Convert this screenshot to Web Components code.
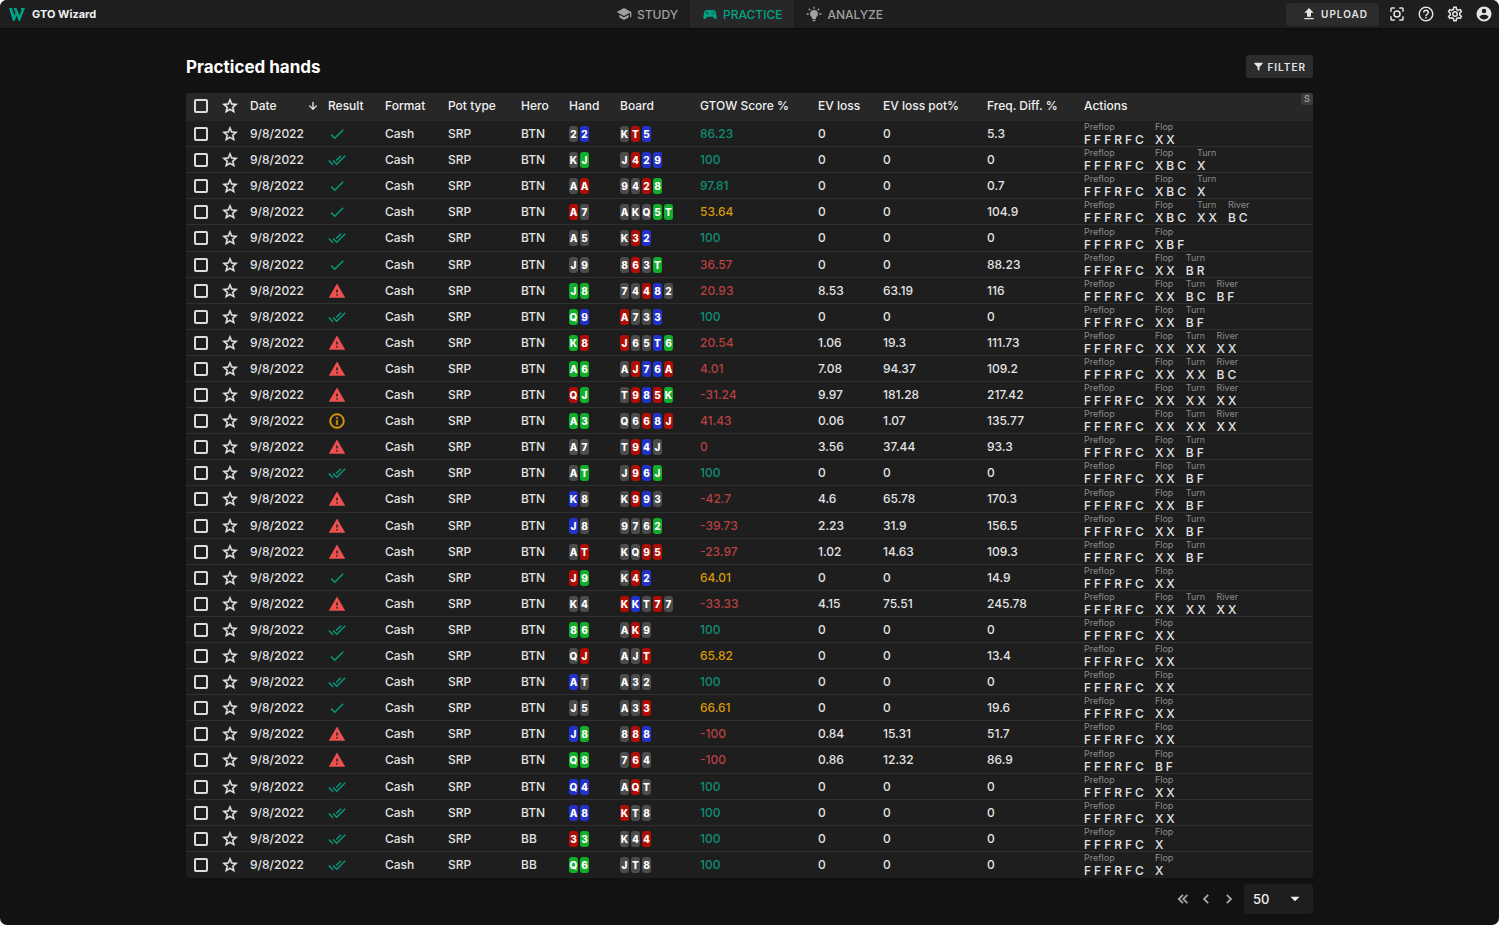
<!DOCTYPE html>
<html lang="en">
<head>
<meta charset="utf-8">
<meta name="viewport" content="width=device-width, initial-scale=1">
<title>GTO Wizard - Practiced hands</title>
<style>
  body { margin: 0; background: #fff; font-family: Inter, "Liberation Sans", sans-serif; font-size: 12px; color: #e4e4e4; }
</style>
</head>
<body>
<gto-app></gto-app>
<script>
const ICONS = {
  study: 'M12,3L1,9L12,15L21,10.09V17H23V9M5,13.18V17.18L12,21L19,17.18V13.18L12,17L5,13.18Z',
  practice: 'M7.97,16L5,19C4.67,19.3 4.23,19.5 3.75,19.5A1.75,1.75 0 0,1 2,17.75V17.5L3,10.12C3.21,7.81 5.14,6 7.5,6H16.5C18.86,6 20.79,7.81 21,10.12L22,17.5V17.75A1.75,1.75 0 0,1 20.25,19.5C19.77,19.5 19.33,19.3 19,19L16.03,16H7.97M7,8V10H5V11H7V13H8V11H10V10H8V8H7M16.5,8A0.75,0.75 0 0,0 15.75,8.75A0.75,0.75 0 0,0 16.5,9.5A0.75,0.75 0 0,0 17.25,8.75A0.75,0.75 0 0,0 16.5,8M14.75,9.75A0.75,0.75 0 0,0 14,10.5A0.75,0.75 0 0,0 14.75,11.25A0.75,0.75 0 0,0 15.5,10.5A0.75,0.75 0 0,0 14.75,9.75M18.25,9.75A0.75,0.75 0 0,0 17.5,10.5A0.75,0.75 0 0,0 18.25,11.25A0.75,0.75 0 0,0 19,10.5A0.75,0.75 0 0,0 18.25,9.75M16.5,11.5A0.75,0.75 0 0,0 15.75,12.25A0.75,0.75 0 0,0 16.5,13A0.75,0.75 0 0,0 17.25,12.25A0.75,0.75 0 0,0 16.5,11.5Z',
  analyze: 'M12,6A6,6 0 0,1 18,12C18,14.22 16.79,16.16 15,17.2V19A1,1 0 0,1 14,20H10A1,1 0 0,1 9,19V17.2C7.21,16.16 6,14.22 6,12A6,6 0 0,1 12,6M14,21V22A1,1 0 0,1 13,23H11A1,1 0 0,1 10,22V21H14M20,11H23V13H20V11M1,11H4V13H1V11M13,1V4H11V1H13M4.92,3.5L7.05,5.64L5.63,7.05L3.5,4.93L4.92,3.5M16.95,5.63L19.07,3.5L20.5,4.93L18.37,7.05L16.95,5.63Z',
  upload: 'M9,16V10H5L12,3L19,10H15V16H9M5,20V18H19V20H5Z',
  focus: 'M5,15H3V19A2,2 0 0,0 5,21H9V19H5M5,5H9V3H5A2,2 0 0,0 3,5V9H5M19,3H15V5H19V9H21V5A2,2 0 0,0 19,3M19,19H15V21H19A2,2 0 0,0 21,19V15H19M12,7A5,5 0 0,0 7,12A5,5 0 0,0 12,17A5,5 0 0,0 17,12A5,5 0 0,0 12,7M12,15A3,3 0 0,1 9,12A3,3 0 0,1 12,9A3,3 0 0,1 15,12A3,3 0 0,1 12,15Z',
  help: 'M11,18H13V16H11V18M12,2A10,10 0 0,0 2,12A10,10 0 0,0 12,22A10,10 0 0,0 22,12A10,10 0 0,0 12,2M12,20C7.59,20 4,16.41 4,12C4,7.59 7.59,4 12,4C16.41,4 20,7.59 20,12C20,16.41 16.41,20 12,20M12,6A4,4 0 0,0 8,10H10A2,2 0 0,1 12,8A2,2 0 0,1 14,10C14,12 11,11.75 11,15H13C13,12.75 16,12.5 16,10A4,4 0 0,0 12,6Z',
  settings: 'M12,8A4,4 0 0,1 16,12A4,4 0 0,1 12,16A4,4 0 0,1 8,12A4,4 0 0,1 12,8M12,10A2,2 0 0,0 10,12A2,2 0 0,0 12,14A2,2 0 0,0 14,12A2,2 0 0,0 12,10M10,22C9.75,22 9.54,21.82 9.5,21.58L9.13,18.93C8.5,18.68 7.96,18.34 7.44,17.94L4.95,18.95C4.73,19.03 4.46,18.95 4.34,18.73L2.34,15.27C2.21,15.05 2.27,14.78 2.46,14.63L4.57,12.97L4.5,12L4.57,11L2.46,9.37C2.27,9.22 2.21,8.95 2.34,8.73L4.34,5.27C4.46,5.05 4.73,4.96 4.95,5.05L7.44,6.05C7.96,5.66 8.5,5.32 9.13,5.07L9.5,2.42C9.54,2.18 9.75,2 10,2H14C14.25,2 14.46,2.18 14.5,2.42L14.87,5.07C15.5,5.32 16.04,5.66 16.56,6.05L19.05,5.05C19.27,4.96 19.54,5.05 19.66,5.27L21.66,8.73C21.79,8.95 21.73,9.22 21.54,9.37L19.43,11L19.5,12L19.43,13L21.54,14.63C21.73,14.78 21.79,15.05 21.66,15.27L19.66,18.73C19.54,18.95 19.27,19.04 19.05,18.95L16.56,17.95C16.04,18.34 15.5,18.68 14.87,18.93L14.5,21.58C14.46,21.82 14.25,22 14,22H10M11.25,4L10.88,6.61C9.68,6.86 8.62,7.5 7.85,8.39L5.44,7.35L4.69,8.65L6.8,10.2C6.4,11.37 6.4,12.64 6.8,13.8L4.68,15.36L5.43,16.66L7.86,15.62C8.63,16.5 9.68,17.14 10.87,17.38L11.24,20H12.76L13.13,17.39C14.32,17.14 15.37,16.5 16.14,15.62L18.57,16.66L19.32,15.36L17.2,13.81C17.6,12.64 17.6,11.37 17.2,10.2L19.31,8.65L18.56,7.35L16.15,8.39C15.38,7.5 14.32,6.86 13.12,6.62L12.75,4H11.25Z',
  account: 'M12,19.2C9.5,19.2 7.29,17.92 6,16C6.03,14 10,12.9 12,12.9C14,12.9 17.97,14 18,16C16.71,17.92 14.5,19.2 12,19.2M12,5A3,3 0 0,1 15,8A3,3 0 0,1 12,11A3,3 0 0,1 9,8A3,3 0 0,1 12,5M12,2A10,10 0 0,0 2,12A10,10 0 0,0 12,22A10,10 0 0,0 22,12C22,6.47 17.5,2 12,2Z',
  filter: 'M3,4H21V6L14,13V21L10,19V13L3,6Z',
  star: 'M12,15.39L8.24,17.66L9.23,13.38L5.91,10.5L10.29,10.13L12,6.09L13.71,10.13L18.09,10.5L14.77,13.38L15.76,17.66M22,9.24L14.81,8.63L12,2L9.19,8.63L2,9.24L7.45,13.97L5.82,21L12,17.27L18.18,21L16.54,13.97L22,9.24Z',
  down: 'M11,4H13V16L18.5,10.5L19.92,11.92L12,19.84L4.08,11.92L5.5,10.5L11,16V4Z',
  good: 'M21,7L9,19L3.5,13.5L4.91,12.09L9,16.17L19.59,5.59L21,7Z',
  best: 'M0.41,13.41L6,19L7.41,17.58L1.83,12M22.24,5.58L11.66,16.17L7.5,12L6.07,13.41L11.66,19L23.66,7M18,7L16.59,5.58L10.24,11.93L11.66,13.34L18,7Z',
  blunder: 'M13,14H11V10H13M13,18H11V16H13M1,21H23L12,2L1,21Z',
  inaccuracy: 'M11,9H13V7H11M12,20C7.59,20 4,16.41 4,12C4,7.59 7.59,4 12,4C16.41,4 20,7.59 20,12C20,16.41 16.41,20 12,20M12,2A10,10 0 0,0 2,12A10,10 0 0,0 12,22A10,10 0 0,0 22,12A10,10 0 0,0 12,2M11,17H13V11H11V17Z',
  first: 'M18.41,7.41L17,6L11,12L17,18L18.41,16.59L13.83,12L18.41,7.41M12.41,7.41L11,6L5,12L11,18L12.41,16.59L7.83,12L12.41,7.41Z',
  prev: 'M15.41,16.58L10.83,12L15.41,7.41L14,6L8,12L14,18L15.41,16.58Z',
  next: 'M8.59,16.58L13.17,12L8.59,7.41L10,6L16,12L10,18L8.59,16.58Z',
  caret: 'M6,9L12,15L18,9H6Z'
};

class GtoElement extends HTMLElement {
  connectedCallback() {
    if (this.shadowRoot) return;
    this.attachShadow({ mode: 'open' }).innerHTML = this.render();
  }
}

customElements.define('gto-icon', class extends GtoElement {
  render() {
    return `<style>
      :host { display: inline-block; flex: none; width: var(--icon-size, 18px); height: var(--icon-size, 18px); }
      svg { display: block; width: 100%; height: 100%; fill: currentColor; }
      :host(:is([name=star], [name=first], [name=prev], [name=next], [name=down], [name=inaccuracy])) svg { stroke: currentColor; stroke-width: 0.6; }
    </style><svg viewBox="0 0 24 24" aria-hidden="true"><path d="${ICONS[this.getAttribute('name')]}"/></svg>`;
  }
});

customElements.define('gto-tab', class extends GtoElement {
  render() {
    return `<style>
      :host { display: flex; }
      a { display: flex; align-items: center; gap: 5px; padding: 0 12px; color: #a0a0a0; text-decoration: none; font-size: 12px; font-weight: 500; --icon-size: 16px; }
      :host([active]) a { background: #272727; color: #00a383; }
    </style><a href="#${this.getAttribute('icon')}"><gto-icon name="${this.getAttribute('icon')}"></gto-icon><slot></slot></a>`;
  }
});

customElements.define('gto-button', class extends GtoElement {
  render() {
    return `<style>
      :host { display: inline-flex; }
      button { display: flex; align-items: center; gap: 3px; height: 23px; margin: 0; padding: 0 7px; border: 0; border-radius: 3px; background: #2c2c2c; color: #e4e4e4; font: 600 10px Inter, sans-serif; letter-spacing: 1px; --icon-size: 11px; }
      :host([wide]) button { gap: 4px; padding: 0 11px 0 15px; --icon-size: 16px; }
    </style><button type="button"><gto-icon name="${this.getAttribute('icon')}"></gto-icon><slot></slot></button>`;
  }
});

customElements.define('gto-icon-button', class extends GtoElement {
  render() {
    return `<style>
      :host { display: inline-flex; }
      button { display: flex; justify-content: center; align-items: center; width: var(--button-width, 29px); margin: 0; padding: 0; border: 0; background: none; color: inherit; }
    </style><button type="button" aria-label="${this.getAttribute('label')}"><gto-icon name="${this.getAttribute('icon')}"></gto-icon></button>`;
  }
});

customElements.define('gto-header', class extends GtoElement {
  render() {
    return `<style>
      :host { display: grid; grid-template-columns: 1fr auto 1fr; height: 28px; background: #1e1e1e; border-bottom: 1px solid #0c0c0c; }
      .brand { display: flex; align-items: center; gap: 7px; padding-left: 9px; color: #f0f0f0; font-size: 11px; font-weight: 700; text-decoration: none; }
      .brand svg { width: 16px; height: 13px; fill: #00a383; }
      nav { display: flex; }
      .tools { display: flex; align-items: center; justify-content: flex-end; padding-right: 1px; color: #e4e4e4; }
      .tools gto-button { margin-right: 3px; }
    </style>
    <a class="brand" href="#home"><svg viewBox="0 0 32 26" aria-hidden="true"><path d="M0 0H6L11 15L13 9L9 0H15L21 15L25 4L23 0H32L22 26H19L15.500 15L11 26H8Z"/></svg>GTO Wizard</a>
    <nav aria-label="Main">
      <gto-tab icon="study">STUDY</gto-tab><gto-tab icon="practice" active>PRACTICE</gto-tab><gto-tab icon="analyze">ANALYZE</gto-tab>
    </nav>
    <div class="tools">
      <gto-button icon="upload" wide>UPLOAD</gto-button>
      <gto-icon-button icon="focus" label="Full screen"></gto-icon-button>
      <gto-icon-button icon="help" label="Help"></gto-icon-button>
      <gto-icon-button icon="settings" label="Settings"></gto-icon-button>
      <gto-icon-button icon="account" label="Account"></gto-icon-button>
    </div>`;
  }
});

/* Cards are pairs of rank and suit: s grey, h red, d blue, c green. */
customElements.define('playing-cards', class extends GtoElement {
  render() {
    const cards = this.getAttribute('cards').match(/../g);
    return `<style>
      :host { display: flex; gap: 2px; }
      span { display: flex; justify-content: center; width: 9px; height: 16px; border-radius: 3px; color: #fff; font-size: 10px; font-weight: 800; line-height: 16px; }
      .s { background: #4c4c4c; } .h { background: #b00e05; } .d { background: #2233cb; } .c { background: #12ae2b; }
    </style>${cards.map(c => `<span class="${c[1]}">${c[0]}</span>`).join('')}`;
  }
});

customElements.define('hand-actions', class extends GtoElement {
  render() {
    const names = ['Preflop', 'Flop', 'Turn', 'River'];
    return `<style>
      :host { display: flex; gap: 11px; }
      .street { display: flex; flex-direction: column; }
      .name { color: #8c8c8c; font-size: 9px; font-weight: 400; line-height: 12px; }
      .moves { display: flex; gap: 3px; font-size: 12px; font-weight: 500; line-height: 13px; }
    </style>${this.getAttribute('line').split(' ').map((s, i) =>
      `<div class="street"><span class="name">${names[i]}</span><span class="moves">${[...s].map(m => `<span>${m}</span>`).join('')}</span></div>`).join('')}`;
  }
});

/* result, hand, board, score, EV loss, EV loss pot %, frequency difference, postflop actions, hero seat */
const ROWS = [
  ['good','2s2d','KsTh5d','86.23','0','0','5.3','XX'],
  ['best','KsJc','Js4h2d9d','100','0','0','0','XBC X'],
  ['good','AsAh','9s4s2h8c','97.81','0','0','0.7','XBC X'],
  ['good','Ah7s','AsKsQs5cTc','53.64','0','0','104.9','XBC XX BC'],
  ['best','As5s','Ks3h2d','100','0','0','0','XBF'],
  ['good','Js9s','8s6h3sTc','36.57','0','0','88.23','XX BR'],
  ['blunder','Jc8c','7s4s4h8d2s','20.93','8.53','63.19','116','XX BC BF'],
  ['best','Qc9d','Ah7s3s3d','100','0','0','0','XX BF'],
  ['blunder','Kc8h','Jh6s5sTd6c','20.54','1.06','19.3','111.73','XX XX XX'],
  ['blunder','Ac6c','AsJh7d6dAh','4.01','7.08','94.37','109.2','XX XX BC'],
  ['blunder','QhJc','Ts9h8d5hKc','-31.24','9.97','181.28','217.42','XX XX XX'],
  ['inaccuracy','Ac3c','Qs6s6h8dJh','41.43','0.06','1.07','135.77','XX XX XX'],
  ['blunder','As7s','Ts9h4dJs','0','3.56','37.44','93.3','XX BF'],
  ['best','AsTc','Js9h6dJc','100','0','0','0','XX BF'],
  ['blunder','Kd8s','Ks9h9d3s','-42.7','4.6','65.78','170.3','XX BF'],
  ['blunder','Jd8s','9s7s6s2c','-39.73','2.23','31.9','156.5','XX BF'],
  ['blunder','AsTh','KsQs9h5h','-23.97','1.02','14.63','109.3','XX BF'],
  ['good','Jh9c','Ks4h2d','64.01','0','0','14.9','XX'],
  ['blunder','Ks4s','KhKdTs7h7s','-33.33','4.15','75.51','245.78','XX XX XX'],
  ['best','8c6c','AsKh9s','100','0','0','0','XX'],
  ['good','QsJh','AsJsTh','65.82','0','0','13.4','XX'],
  ['best','AdTs','As3s2s','100','0','0','0','XX'],
  ['good','Js5s','As3s3h','66.61','0','0','19.6','XX'],
  ['blunder','Jd8c','8s8h8d','-100','0.84','15.31','51.7','XX'],
  ['blunder','Qc8c','7s6h4s','-100','0.86','12.32','86.9','BF'],
  ['best','Qd4d','AsQhTs','100','0','0','0','XX'],
  ['best','Ad8d','KhTs8s','100','0','0','0','XX'],
  ['best','3h3c','Ks4s4h','100','0','0','0','X','BB'],
  ['best','Qc6c','JsTs8s','100','0','0','0','X','BB']
];

customElements.define('hands-table', class extends GtoElement {
  row([result, hand, board, score, ev, evPot, freq, line, hero = 'BTN'], i) {
    const level = score > 80 ? 'high' : score > 50 ? 'mid' : 'low';
    return `<tr>
      <td class="pick"><input type="checkbox" aria-label="Select hand ${i + 1}"></td>
      <td class="fav"><gto-icon-button icon="star" label="Favourite hand ${i + 1}"></gto-icon-button></td>
      <td>9/8/2022</td>
      <td class="result ${result}"><gto-icon name="${result}"></gto-icon></td>
      <td>Cash</td><td>SRP</td><td>${hero}</td>
      <td><playing-cards cards="${hand}"></playing-cards></td>
      <td><playing-cards cards="${board}"></playing-cards></td>
      <td class="${level}">${score}</td><td>${ev}</td><td>${evPot}</td><td>${freq}</td>
      <td><hand-actions line="FFFRFC ${line}"></hand-actions></td>
    </tr>`;
  }
  render() {
    const widths = [35, 29, 78, 57, 63, 73, 48, 51, 80, 118, 65, 104, 97];
    const heads = ['Format', 'Pot type', 'Hero', 'Hand', 'Board', 'GTOW Score %', 'EV loss', 'EV loss pot%', 'Freq. Diff. %', 'Actions'];
    return `<style>
      :host { display: block; position: relative; }
      table { width: 100%; table-layout: fixed; border-collapse: separate; border-spacing: 0; border-radius: 3px; overflow: hidden; background: #1e1e1e; }
      th, td { padding: 0; text-align: left; vertical-align: middle; white-space: nowrap; line-height: 16px; font-weight: 500; }
      th { height: 26px; padding-bottom: 2px; background: #272727; color: #f0f0f0; }
      td { height: 25px; border-bottom: 1px solid #303030; }
      tr:nth-child(10n+5) td { height: 26px; }
      tbody tr:last-child td { border-bottom-color: transparent; }
      .pick { padding-left: 8px; }
      input { display: block; appearance: none; box-sizing: border-box; width: 14px; height: 14px; margin: 0; border: 2px solid #dcdcdc; border-radius: 2px; }
      input:checked { background: #00a383; }
      .fav gto-icon-button { display: flex; --button-width: 18px; }
      .result gto-icon { display: block; }
      .good, .best { color: #07997c; } .blunder { color: #ee4f4f; } .inaccuracy { color: #d99a06; }
      .high { color: #0c8f74; } .mid { color: #d99a06; } .low { color: #b94141; }
      .sorted { display: flex; align-items: center; justify-content: space-between; padding-right: 9px; --icon-size: 12px; }
      kbd { position: absolute; top: 0; right: 0; width: 12px; border-radius: 3px; background: #3c3c3c; color: #989898; font: 600 9px/12px Inter, sans-serif; text-align: center; }
    </style>
    <table>
      <colgroup>${widths.map(w => `<col style="width:${w}px">`).join('')}<col></colgroup>
      <thead><tr>
        <th class="pick"><input type="checkbox" aria-label="Select all hands"></th>
        <th class="fav"><gto-icon-button icon="star" label="Favourites"></gto-icon-button></th>
        <th aria-sort="descending"><span class="sorted">Date <gto-icon name="down"></gto-icon></span></th>
        <th>Result</th>${heads.map(h => `<th>${h}</th>`).join('')}
      </tr></thead>
      <tbody>${ROWS.map((r, i) => this.row(r, i)).join('')}</tbody>
    </table><kbd>S</kbd>`;
  }
});

customElements.define('gto-pager', class extends GtoElement {
  render() {
    return `<style>
      :host { display: flex; justify-content: flex-end; align-items: center; gap: 3px; color: #a8a8a8; --button-width: 20px; }
      .size { display: grid; align-items: center; width: 69px; margin-left: 2px; color: #f0f0f0; }
      select, .size gto-icon { grid-area: 1 / 1; }
      select { appearance: none; height: 30px; margin: 0; padding: 0 9px; border: 0; border-radius: 3px; background: #1e1e1e; color: inherit; font: 500 13px Inter, sans-serif; }
      .size gto-icon { justify-self: end; margin-right: 9px; pointer-events: none; }
    </style>
    <gto-icon-button icon="first" label="First page"></gto-icon-button>
    <gto-icon-button icon="prev" label="Previous page"></gto-icon-button>
    <gto-icon-button icon="next" label="Next page"></gto-icon-button>
    <div class="size"><select aria-label="Rows per page"><option>50</option><option>100</option></select><gto-icon name="caret"></gto-icon></div>`;
  }
});

customElements.define('gto-app', class extends GtoElement {
  render() {
    return `<style>
      :host { display: block; box-sizing: border-box; min-height: 100vh; margin-right: 1px; border-radius: 7px; overflow: hidden; background: #121212; }
      main { max-width: 1127px; margin: 0 auto; padding: 26px 0 8px; }
      .title { display: flex; align-items: flex-start; justify-content: space-between; height: 24px; margin-bottom: 14px; }
      h1 { margin: 0; color: #fff; font-size: 17px; font-weight: 700; line-height: 25px; }
      gto-pager { margin-top: 6px; }
    </style>
    <gto-header></gto-header>
    <main>
      <div class="title"><h1>Practiced hands</h1><gto-button icon="filter">FILTER</gto-button></div>
      <hands-table></hands-table>
      <gto-pager></gto-pager>
    </main>`;
  }
});
</script>
</body>
</html>
